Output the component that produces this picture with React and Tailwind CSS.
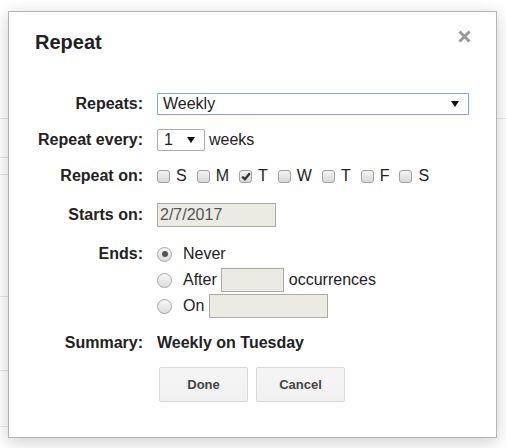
import React from 'react';

const font = { fontFamily: '"Liberation Sans", Arial, sans-serif' };

// ── Piezas pequeñas ───────────────────────────────────────────────────────────
function Arrow() {
  return (
    <svg width="8" height="6" viewBox="0 0 8 6" className="shrink-0">
      <path d="M0,0 L8,0 L4,6 Z" fill="#111" />
    </svg>
  );
}

function Checkbox({ checked }) {
  return (
    <span className="w-[13px] h-[13px] shrink-0 rounded-[3px] border border-[#a0a0a0] bg-gradient-to-b from-[#f4f4f4] to-[#d8d8d8] flex items-center justify-center">
      {checked && (
        <svg width="10" height="9" viewBox="0 0 10 9">
          <path d="M1.2,4.6 L3.9,7.3 L8.8,1.2" fill="none" stroke="#333" strokeWidth="2.2" />
        </svg>
      )}
    </span>
  );
}

function Radio({ checked }) {
  return (
    <span className="w-[15px] h-[15px] shrink-0 rounded-full border border-[#a6a6a6] bg-gradient-to-b from-[#f7f7f7] to-[#dcdcdc] flex items-center justify-center">
      {checked && <span className="w-[6px] h-[6px] rounded-full bg-[#555]" />}
    </span>
  );
}

function Label({ children, className = '' }) {
  return (
    <div className={`w-[108px] shrink-0 text-right font-bold whitespace-nowrap ${className}`}>
      {children}
    </div>
  );
}

const days = ['S', 'M', 'T', 'W', 'T', 'F', 'S'];

export default function App() {
  return (
    <div className="relative w-[506px] h-[448px] bg-white overflow-hidden" style={font}>
      {/* ── Página de fondo ── */}
      <div className="h-[119px] border-b border-[#e6e6e6]" />
      <div className="w-[40px]">
        <div className="h-[39px] border-b border-[#e6e6e6]" />
        <div className="h-[17px] border-b border-[#e6e6e6]" />
        <div className="h-[122px] border-b border-[#e6e6e6]" />
        <div className="h-[74px] border-b border-[#e6e6e6]" />
        <div className="h-[56px] border-b border-[#e6e6e6]" />
      </div>

      {/* ── Diálogo ── */}
      <div className="absolute left-[8px] top-[11px] w-[489px] bg-white border border-[#b4b4b4] shadow-[0_4px_16px_rgba(0,0,0,0.2)] pl-[26px] pt-[18px] pb-[35px] text-[16px] text-[#222]">
        <button className="absolute top-[18px] right-[25px] w-[13px] h-[13px] flex items-center justify-center">
          <svg width="13" height="13" viewBox="0 0 13 13">
            <path d="M1.5,1.5 L11.5,11.5 M11.5,1.5 L1.5,11.5" stroke="#999" strokeWidth="3" />
          </svg>
        </button>

        <h2 className="text-[20px] leading-[24px] font-bold text-[#222]">Repeat</h2>

        <div className="flex flex-col">
          {/* Repeats */}
          <div className="mt-[39px] h-[22px] flex items-center gap-[14px]">
            <Label>Repeats:</Label>
            <div className="w-[312px] h-[22px] border border-[#7ea6ee] flex items-center justify-between pl-[5px] pr-[9px]">
              <span>Weekly</span>
              <Arrow />
            </div>
          </div>

          {/* Repeat every */}
          <div className="mt-[14px] h-[22px] flex items-center gap-[14px]">
            <Label>Repeat every:</Label>
            <div className="flex items-center gap-[4px]">
              <div className="w-[48px] h-[22px] border border-[#a9a9a9] rounded-[2px] flex items-center justify-between pl-[6px] pr-[9px]">
                <span>1</span>
                <Arrow />
              </div>
              <span>weeks</span>
            </div>
          </div>

          {/* Repeat on */}
          <div className="mt-[15px] h-[20px] flex items-center gap-[14px]">
            <Label>Repeat on:</Label>
            <div className="flex items-center">
              {days.map((d, i) => (
                <span key={i} className="flex items-center mr-[10px]">
                  <Checkbox checked={i === 2} />
                  <span className="ml-[6px]">{d}</span>
                </span>
              ))}
            </div>
          </div>

          {/* Starts on */}
          <div className="mt-[17px] h-[24px] flex items-center gap-[14px]">
            <Label>Starts on:</Label>
            <div className="w-[119px] h-[24px] bg-[#ebebe4] border border-[#a9a9a9] flex items-center pl-[2px] text-[#545454]">
              2/7/2017
            </div>
          </div>

          {/* Ends */}
          <div className="mt-[14px] flex gap-[14px]">
            <Label className="h-[26px] flex items-center justify-end">Ends:</Label>
            <div className="flex flex-col">
              <div className="h-[26px] flex items-center">
                <Radio checked />
                <span className="ml-[11px]">Never</span>
              </div>
              <div className="h-[26px] flex items-center">
                <Radio />
                <span className="ml-[11px]">After</span>
                <span className="ml-[4px] w-[63px] h-[24px] bg-[#ebebe4] border border-[#a9a9a9]" />
                <span className="ml-[5px]">occurrences</span>
              </div>
              <div className="h-[26px] flex items-center">
                <Radio />
                <span className="ml-[11px]">On</span>
                <span className="ml-[5px] w-[119px] h-[24px] bg-[#ebebe4] border border-[#a9a9a9]" />
              </div>
            </div>
          </div>

          {/* Summary */}
          <div className="mt-[14px] h-[20px] flex items-center gap-[14px]">
            <Label>Summary:</Label>
            <span className="font-bold">Weekly on Tuesday</span>
          </div>

          {/* Botones */}
          <div className="mt-[14px] flex gap-[14px]">
            <div className="w-[108px] shrink-0" />
            <div className="ml-[2px] flex gap-[8px]">
              <button className="w-[89px] h-[35px] rounded-[2px] border border-[#d9d9d9] bg-gradient-to-b from-[#f5f5f5] to-[#f1f1f1] text-[13px] font-bold text-[#444]">
                Done
              </button>
              <button className="w-[89px] h-[35px] rounded-[2px] border border-[#d9d9d9] bg-gradient-to-b from-[#f5f5f5] to-[#f1f1f1] text-[13px] font-bold text-[#444]">
                Cancel
              </button>
            </div>
          </div>
        </div>
      </div>
    </div>
  );
}
